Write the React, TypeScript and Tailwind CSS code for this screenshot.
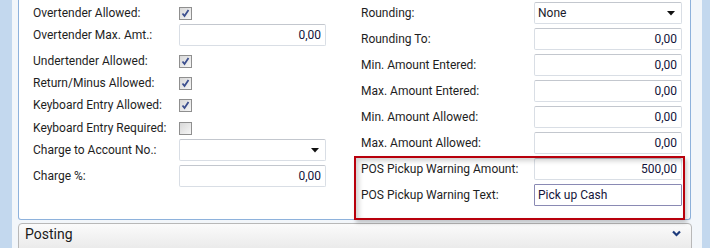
const FONT = "font-['Roboto','Open_Sans',sans-serif]";

type LeftRow =
  | { label: string; kind: "check"; checked: boolean; mt: string }
  | { label: string; kind: "input"; value: string; mt: string }
  | { label: string; kind: "select"; value: string; mt: string };

const LEFT: LeftRow[] = [
  { label: "Overtender Allowed:", kind: "check", checked: true, mt: "mt-[2px]" },
  { label: "Overtender Max. Amt.:", kind: "input", value: "0,00", mt: "mt-0" },
  { label: "Undertender Allowed:", kind: "check", checked: true, mt: "mt-[4px]" },
  { label: "Return/Minus Allowed:", kind: "check", checked: true, mt: "mt-0" },
  { label: "Keyboard Entry Allowed:", kind: "check", checked: true, mt: "mt-0" },
  { label: "Keyboard Entry Required:", kind: "check", checked: false, mt: "mt-[1px]" },
  { label: "Charge to Account No.:", kind: "select", value: "", mt: "mt-0" },
  { label: "Charge %:", kind: "input", value: "0,00", mt: "mt-[4px]" },
];

const RIGHT: { label: string; kind: "input" | "select" | "text"; value: string }[] = [
  { label: "Rounding:", kind: "select", value: "None" },
  { label: "Rounding To:", kind: "input", value: "0,00" },
  { label: "Min. Amount Entered:", kind: "input", value: "0,00" },
  { label: "Max. Amount Entered:", kind: "input", value: "0,00" },
  { label: "Min. Amount Allowed:", kind: "input", value: "0,00" },
  { label: "Max. Amount Allowed:", kind: "input", value: "0,00" },
  { label: "POS Pickup Warning Amount:", kind: "input", value: "500,00" },
  { label: "POS Pickup Warning Text:", kind: "text", value: "Pick up Cash" },
];

function CheckBox({ checked }: { checked: boolean }) {
  return (
    <span className="w-[13px] h-[13px] border border-[#8f8f8f] bg-gradient-to-br from-[#d8d8d8] to-[#f6f6f6] flex items-center justify-center">
      {checked && (
        <svg width="9" height="9" viewBox="0 0 9 9" aria-hidden="true">
          <path d="M1.5 4.5 L3.5 7 L7.5 1" fill="none" stroke="#3c4f8f" strokeWidth="1.8" />
        </svg>
      )}
    </span>
  );
}

function Arrow() {
  return (
    <svg width="8" height="5" viewBox="0 0 8 5" aria-hidden="true">
      <path d="M0 0 H8 L4 4.5 Z" fill="#111" />
    </svg>
  );
}

function Field({ kind, value }: { kind: "input" | "select" | "text"; value: string }) {
  if (kind === "select") {
    return (
      <div className="w-[148px] h-[22px] rounded-[2px] border border-[#d9dee5] border-t-[#c3c7ce] bg-white flex items-center justify-between pl-[3px] pr-[6px] text-[#1a1a2a]">
        <span>{value}</span>
        <Arrow />
      </div>
    );
  }
  if (kind === "text") {
    return (
      <div className="w-[148px] h-[22px] rounded-[1px] border border-[#8a8ab4] bg-white flex items-center pl-[3px] text-[#14143a]">
        {value}
      </div>
    );
  }
  return (
    <div className="w-[148px] h-[22px] rounded-[2px] border border-[#d9dee5] border-t-[#c3c7ce] bg-white flex items-center justify-end pr-[4px] text-[#14143a]">
      {value}
    </div>
  );
}

export default function App() {
  return (
    <div className={`w-[710px] h-[248px] overflow-hidden flex bg-[#f2f6fa] text-[12px] text-[#1e1e1e] ${FONT}`}>
      <div className="w-[12px] shrink-0 bg-[#c3d8ee]" />
      <div className="ml-[6px] w-[674px] shrink-0 flex flex-col">
        <div className="relative w-[673px] h-[220px] shrink-0 bg-white border-x border-b border-[#8eb2dc] rounded-b-[3px] flex pl-[14px]">
          <div className="w-[293px] flex flex-col">
            {LEFT.map((r) => (
              <div key={r.label} className={`h-[22px] flex items-center ${r.mt}`}>
                <span className="w-[146px] shrink-0 whitespace-nowrap">{r.label}</span>
                {r.kind === "check" ? (
                  <CheckBox checked={r.checked} />
                ) : (
                  <Field kind={r.kind} value={r.value} />
                )}
              </div>
            ))}
          </div>
          <div className="ml-[35px] pt-[2px] flex flex-col gap-[4px]">
            {RIGHT.map((r) => (
              <div key={r.label} className="h-[22px] flex items-center">
                <span className="w-[173px] shrink-0 whitespace-nowrap">{r.label}</span>
                <Field kind={r.kind} value={r.value} />
              </div>
            ))}
          </div>
          <div className="absolute left-[335px] top-[156px] w-[331px] h-[64px] border-2 border-[#b8000c] shadow-[inset_3px_3px_5px_rgba(0,0,0,0.18),2px_3px_4px_rgba(0,0,0,0.2)]" />
        </div>
        <div className="mt-[3px] w-[674px] h-[30px] shrink-0 rounded-t-[4px] border border-[#b8b8b8] bg-gradient-to-b from-[#fbfbfb] to-[#e8e8e8] flex items-start justify-between pl-[6px] pr-[10px]">
          <span className="text-[14px] leading-[20px] text-[#1a1a1a]">Posting</span>
          <svg width="9" height="7" viewBox="0 0 9 7" className="mt-[6px]" aria-hidden="true">
            <path d="M1 1.5 L4.5 5 L8 1.5" fill="none" stroke="#1d3b7c" strokeWidth="2.2" />
          </svg>
        </div>
      </div>
      <div className="ml-auto w-[8px] shrink-0 bg-[#c3d8ee]" />
    </div>
  );
}
